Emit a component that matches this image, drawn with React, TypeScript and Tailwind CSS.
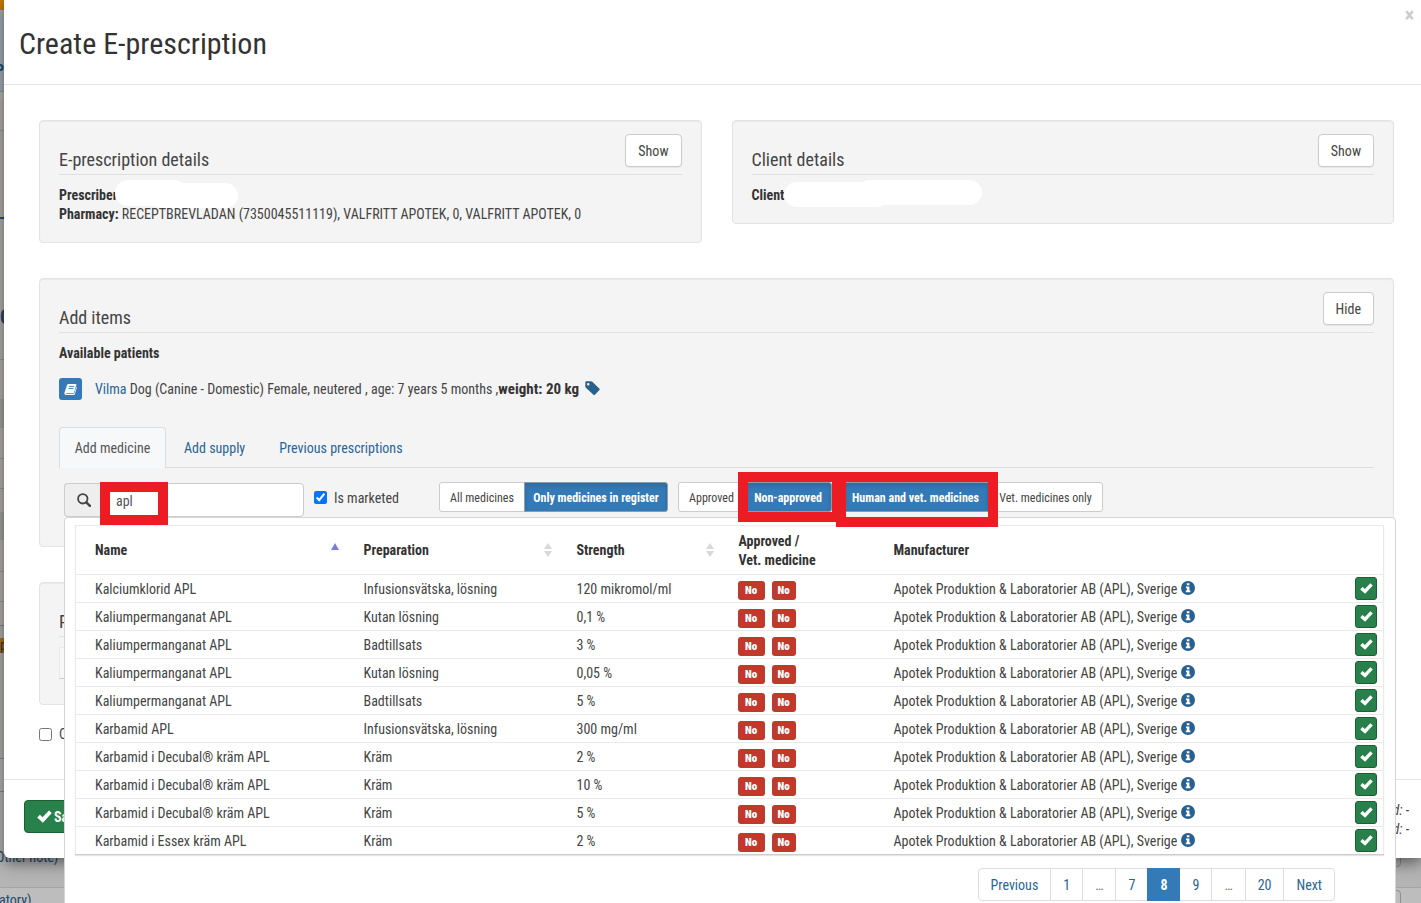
import React from 'react';
import clsx from 'clsx';

interface Medicine {
  id: number;
  name: string;
  preparation: string;
  strength: string;
}

const medicines: Medicine[] = [
  { id: 1, name: 'Kalciumklorid APL', preparation: 'Infusionsvätska, lösning', strength: '120 mikromol/ml' },
  { id: 2, name: 'Kaliumpermanganat APL', preparation: 'Kutan lösning', strength: '0,1 %' },
  { id: 3, name: 'Kaliumpermanganat APL', preparation: 'Badtillsats', strength: '3 %' },
  { id: 4, name: 'Kaliumpermanganat APL', preparation: 'Kutan lösning', strength: '0,05 %' },
  { id: 5, name: 'Kaliumpermanganat APL', preparation: 'Badtillsats', strength: '5 %' },
  { id: 6, name: 'Karbamid APL', preparation: 'Infusionsvätska, lösning', strength: '300 mg/ml' },
  { id: 7, name: 'Karbamid i Decubal® kräm APL', preparation: 'Kräm', strength: '2 %' },
  { id: 8, name: 'Karbamid i Decubal® kräm APL', preparation: 'Kräm', strength: '10 %' },
  { id: 9, name: 'Karbamid i Decubal® kräm APL', preparation: 'Kräm', strength: '5 %' },
  { id: 10, name: 'Karbamid i Essex kräm APL', preparation: 'Kräm', strength: '2 %' },
];

const pages = ['Previous', '1', '…', '7', '8', '9', '…', '20', 'Next'];

const CheckIcon = ({ className }: { className?: string }) => (
  <svg viewBox="0 0 14 12" className={className} fill="currentColor" aria-hidden="true">
    <path d="M0.2 7 2.7 4.400 5.200 6.600 11.200 0.300 13.800 2.700 5.500 11.800Z" />
  </svg>
);

const SearchIcon = () => (
  <svg viewBox="0 0 14 14" className="h-[14px] w-[14px]" fill="none" stroke="currentColor" aria-hidden="true">
    <circle cx="5.8" cy="5.8" r="4.7" strokeWidth="1.8" />
    <path d="m9.3 9.3 3.6 3.6" strokeWidth="2.4" strokeLinecap="round" />
  </svg>
);

const BookIcon = () => (
  <svg viewBox="0 0 14 14" className="h-[13px] w-[13px]" aria-hidden="true">
    <path
      d="M5 1h7.5c.7 0 1 .5.8 1.1l-2.5 8c-.2.5-.6.8-1.1.8H2.6c-.5 0-.6.7 0 .7h7.6c.5 0 .9-.3 1-.8L13.4 4c.4.3.5.7.4 1.1l-2.2 7c-.2.6-.7.9-1.3.9H2.2C.8 13 .1 11.800.5 10.600L3.200 2.300C3.500 1.500 4.100 1 5 1Z"
      fill="#fff"
    />
    <path d="M5.500 3.700h5.400M4.900 5.900h5.300" stroke="#337ab7" strokeWidth="1" />
  </svg>
);

const TagIcon = () => (
  <svg viewBox="0 0 14 14" className="mb-[2px] h-[15px] w-[15px]" fill="#286090" aria-hidden="true">
    <path
      fillRule="evenodd"
      d="M.3 1.100C.3.600.6.300 1.100.300h4.600c.4 0 .8.200 1.100.500l6.700 6.400c.4.400.4.900 0 1.300L9.200 12.900c-.4.400-.9.400-1.300 0L.8 6.200C.5 5.900.3 5.500.3 5.100ZM3 1.800a1.200 1.200 0 1 0 0 2.400 1.200 1.200 0 0 0 0-2.400Z"
    />
  </svg>
);

const InfoIcon = () => (
  <svg viewBox="0 0 14 14" className="inline-block h-[14px] w-[14px] align-[-1px]" aria-hidden="true">
    <circle cx="7" cy="7" r="7" fill="#286090" />
    <path d="M5.800 2.300h2.600v2H5.800ZM5 5.500h3.400v4h1v1.800H4.800V9.500h1.100V7.300H5Z" fill="#fff" />
  </svg>
);

const SortIcon = ({ sorted }: { sorted?: boolean }) =>
  sorted ? (
    <svg viewBox="0 0 10 14" className="h-[14px] w-[10px]" fill="#7b7fdc" aria-hidden="true">
      <path d="M5 0 9 7H1Z" />
    </svg>
  ) : (
    <svg viewBox="0 0 10 14" className="h-[14px] w-[10px]" fill="#d9d9d9" aria-hidden="true">
      <path d="M5 0 9 6H1ZM5 14 1 8h8Z" />
    </svg>
  );

const Panel = ({ title, action, children }: { title: string; action?: string; children: React.ReactNode }) => (
  <section className="rounded border border-[#e3e3e3] bg-[#f4f4f4] px-[19px] pt-3 pb-[18px] shadow-[inset_0_1px_1px_rgba(0,0,0,0.05)]">
    <div className="flex h-[42px] items-start justify-between border-b border-[#e0e0e0]">
      <h2 className="mt-[17px] text-[18px] leading-5">{title}</h2>
      {action && (
        <button
          type="button"
          className="mt-px h-[33px] rounded border border-[#ccc] bg-white px-3 text-[14px] shadow-[0_1px_1px_rgba(0,0,0,0.06)]"
        >
          {action}
        </button>
      )}
    </div>
    {children}
  </section>
);

interface ToggleProps {
  label: string;
  active?: boolean;
  className?: string;
}

const Toggle = ({ label, active, className }: ToggleProps) => (
  <button
    type="button"
    aria-pressed={!!active}
    className={clsx(
      'h-[30px] border pt-px text-center text-[12px] whitespace-nowrap',
      active
        ? 'border-[#8f9ba6] bg-[#337ab7] font-bold text-white shadow-[inset_0_3px_5px_rgba(0,0,0,0.125)]'
        : 'border-[#ccc] bg-white',
      className,
    )}
  >
    {label}
  </button>
);

// What is left visible of the journal page behind the dialog
const Backdrop = () => (
  <div className="absolute inset-0 flex flex-col bg-[#b4b4b4] text-[14px] text-[#1f4a70]" aria-hidden="true">
    <div className="h-[10px] bg-[#c47a00]" />
    <div className="flex h-[82px] items-end border-b border-[#8f979d] bg-[#a3aeb6] pb-[11px]">
      <span className="-ml-1 leading-5 font-bold">P</span>
    </div>
    <div className="h-2 bg-[#b9b9ae]" />
    <div className="h-[31px] border-b border-[#9a9a9a] bg-[#b4b1af]" />
    <div className="h-[88px] border-b-2 border-[#24527c] bg-[#b2b0ad]" />
    <div className="flex h-[141px] items-end border-b border-[#9a9a9a] bg-[#b2b2af] pb-8">
      <span className="text-[20px] leading-5 font-bold">C</span>
    </div>
    <div className="h-[39px] bg-[#b4b3b0]" />
    <div className="h-[29px] bg-[#a5a4a2]" />
    <div className="h-[31px] border-b border-[#9a9a9a] bg-[#b4b3b0]" />
    <div className="h-[30px] border-b border-[#9a9a9a] bg-[#b4b3b0]" />
    <div className="h-[23px] bg-[#b4b3b0]" />
    <div className="h-7 bg-[#a5a4a2]" />
    <div className="h-8 border-b border-[#9a9a9a] bg-[#b4b3b0]" />
    <div className="h-[30px] border-b border-[#9a9a9a] bg-[#b4b3b0]" />
    <div className="h-6 border-b border-[#888] bg-[#b4b3b0]" />
    <div className="flex h-[133px] items-start border-b border-[#888] bg-[#b1b2af] pt-3">
      <span className="w-1 bg-[#b07420] leading-[15px] text-[#333]">p</span>
    </div>
    <div className="h-[33px] border-b border-[#888]" />
    <div className="flex grow items-end justify-between border-b border-[#a5a5a5] pb-5">
      <span className="-ml-1 leading-5">Other note)</span>
      <span className="mr-5 h-5 w-3 rounded border border-[#8e8e8e]" />
    </div>
    <div className="flex h-[15px] items-start justify-between bg-[#bdbdbd] pt-[2px]">
      <span className="-ml-px leading-5">atory)</span>
      <span className="mr-5 h-5 w-3 rounded border border-[#8e8e8e]" />
    </div>
  </div>
);

const MedicineResults = () => (
  <div className="absolute top-full -right-[22px] left-0 z-10 h-[440px] rounded border border-[#d5d5d5] bg-white pt-[7px] pr-[11px] pl-[10px]">
    <table className="w-full table-fixed border border-[#eaeaea] border-b-[#ccc] text-left text-[14px] shadow-[0_1px_1px_rgba(0,0,0,0.1)]">
      <colgroup>
        <col className="w-[280px]" />
        <col className="w-[213px]" />
        <col className="w-[162px]" />
        <col className="w-[155px]" />
        <col />
        <col className="w-10" />
      </colgroup>
      <thead>
        <tr className="h-[49px] leading-[19px] text-[#333]">
          <th className="pr-4 pl-[19px]">
            <span className="flex items-center justify-between">
              Name <SortIcon sorted />
            </span>
          </th>
          <th className="pr-4 pl-2">
            <span className="flex items-center justify-between">
              Preparation <SortIcon />
            </span>
          </th>
          <th className="pr-4 pl-2">
            <span className="flex items-center justify-between">
              Strength <SortIcon />
            </span>
          </th>
          <th className="pt-px pl-2">
            Approved /<br />
            Vet. medicine
          </th>
          <th className="pl-2">Manufacturer</th>
          <th aria-label="Select" />
        </tr>
      </thead>
      <tbody>
        {medicines.map((m) => (
          <tr key={m.id} className="h-7 border-t border-[#eaeaea] leading-5 whitespace-nowrap">
            <td className="pl-[19px]">{m.name}</td>
            <td className="pl-2">{m.preparation}</td>
            <td className="pl-2">{m.strength}</td>
            <td className="pl-[7px]">
              <span className="flex gap-[7px] pt-[3px] text-[11px] leading-[19px] font-black text-white">
                <span className="w-[27px] rounded-[3px] bg-[#c0392b] text-center">No</span>
                <span className="w-6 rounded-[3px] bg-[#c0392b] text-center">No</span>
              </span>
            </td>
            <td className="pl-2">
              Apotek Produktion &amp; Laboratorier AB (APL), Sverige <InfoIcon />
            </td>
            <td className="pr-[6px]">
              <button
                type="button"
                aria-label={`Add ${m.name}`}
                className="ml-auto flex h-[23px] w-[22px] items-center justify-center rounded-[3px] border border-[#1c5f33] bg-[#28814a] text-white"
              >
                <CheckIcon className="h-[11px] w-[13px]" />
              </button>
            </td>
          </tr>
        ))}
      </tbody>
    </table>

    <nav className="mt-[13px] mr-[49px] flex justify-end" aria-label="Result pages">
      {pages.map((p, i) => (
        <a
          key={i}
          href="#"
          aria-current={p === '8' ? 'page' : undefined}
          className={clsx(
            '-ml-px flex h-[33px] items-center border px-3 text-[14px] first:rounded-l last:rounded-r',
            p === '8' && 'z-10 border-[#337ab7] bg-[#337ab7] font-bold text-white',
            p === '…' && 'border-[#ddd] text-[#777]',
            p !== '8' && p !== '…' && 'border-[#ddd] text-[#2a6496]',
          )}
        >
          {p}
        </a>
      ))}
    </nav>
  </div>
);

const MedicineSearch = () => (
  <div className="relative mt-[14px] ml-[5px] flex h-[35px] items-start">
    <label htmlFor="medicine-search" className="mt-px flex h-[34px] w-10 items-center justify-center rounded-l border border-r-0 border-[#ccc] bg-[#eee] pr-[2px]">
      <span className="sr-only">Search medicine</span>
      <SearchIcon />
    </label>
    <div className="relative mt-px w-[200px]">
      <input
        id="medicine-search"
        type="text"
        defaultValue="apl"
        className="h-[34px] w-full rounded-r border border-[#ccc] bg-white px-[11px] pt-[2px] text-[14px] text-[#555]"
      />
      <span className="absolute -top-px -left-1 z-20 h-[43px] w-[68px] border-10 border-[#ed1c24]" />
    </div>
    <label className="ml-[10px] flex h-8 items-center gap-[7px] whitespace-nowrap">
      <input type="checkbox" defaultChecked className="mb-[2px] h-[13px] w-[13px]" />
      Is marketed
    </label>

    <div className="ml-10 flex">
      <Toggle label="All medicines" className="w-[86px] rounded-l-[3px]" />
      <Toggle label="Only medicines in register" active className="-ml-px w-36 rounded-r-[3px]" />
    </div>
    <div className="ml-[10px] flex">
      <Toggle label="Approved" className="w-[67px] rounded-l-[3px]" />
      <div className="relative -ml-px">
        <Toggle label="Non-approved" active className="w-[88px] rounded-r-[3px]" />
        <span className="absolute -top-[10px] -left-[6px] z-20 h-[50px] w-[104px] border-10 border-[#ed1c24]" />
      </div>
    </div>
    <div className="ml-[10px] flex">
      <div className="relative">
        <Toggle label="Human and vet. medicines" active className="w-[147px] rounded-l-[3px]" />
        <span className="absolute -top-[10px] -left-[6px] z-20 h-[55px] w-[162px] border-10 border-[#ed1c24]" />
      </div>
      <Toggle label="Vet. medicines only" className="-ml-px w-[115px] rounded-r-[3px]" />
    </div>

    <MedicineResults />
  </div>
);

export default function App() {
  return (
    <div className="relative h-screen overflow-hidden font-['Roboto_Condensed','Liberation_Sans_Narrow','Roboto',sans-serif] text-[14px] leading-5 text-[#444]">
      <Backdrop />
      <div
        role="dialog"
        aria-labelledby="dialog-title"
        className="relative ml-1 rounded-bl-md bg-white shadow-[0_5px_15px_rgba(0,0,0,0.5)]"
      >
        <header className="relative flex h-[85px] items-center border-b border-[#e5e5e5] px-[15px] pt-[3px]">
          <h1 id="dialog-title" className="text-[30px] leading-9 text-[#333]">Create E-prescription</h1>
          <button type="button" aria-label="Close" className="absolute top-[5px] right-[7px] text-[20px] font-bold text-[#ccc]">
            ×
          </button>
        </header>

        <main className="flex flex-col gap-[35px] pt-[35px] pr-[27px] pl-[35px]">
          <div className="grid grid-cols-2 items-start gap-[30px]">
            <Panel title="E-prescription details" action="Show">
              <div className="relative mt-[11px] leading-[19px]">
                <p><b className="text-[#333]">Prescriber:</b></p>
                <p>
                  <b className="text-[#333]">Pharmacy:</b> RECEPTBREVLÅDAN (7350045511119), VALFRITT APOTEK, 0, VALFRITT APOTEK, 0
                </p>
                <span className="absolute -top-[6px] left-14 h-[26px] w-[72px] rounded-full bg-white" />
                <span className="absolute -top-[3px] left-[90px] h-[25px] w-[89px] rounded-full bg-white" />
              </div>
            </Panel>
            <Panel title="Client details" action="Show">
              <div className="relative mt-[11px] leading-[19px]">
                <p><b className="text-[#333]">Client:</b></p>
                <span className="absolute -top-1 left-8 h-[25px] w-[105px] rounded-full bg-white" />
                <span className="absolute -top-[6px] left-[105px] h-[25px] w-[125px] rounded-full bg-white" />
              </div>
            </Panel>
          </div>

          <Panel title="Add items" action="Hide">
            <p className="mt-[10px] font-bold text-[#333]">Available patients</p>
            <div className="mt-[15px] flex h-[22px] items-center">
              <button type="button" aria-label="Open journal" className="mr-[13px] flex h-[22px] w-[23px] items-center justify-center rounded-[3px] bg-[#337ab7]">
                <BookIcon />
              </button>
              <p className="mr-[6px]">
                <a href="#" className="text-[#2a6496]">Vilma</a> Dog (Canine - Domestic) Female, neutered , age: 7 years 5 months ,
                <b className="text-[15px] text-[#333]">weight: 20 kg</b>
              </p>
              <TagIcon />
            </div>

            <div className="mt-[27px] flex h-[41px] border-b border-[#ddd]">
              <a href="#" className="-mb-px flex w-[107px] items-center justify-center rounded-t border border-b-0 border-[#ddd] bg-[#f7f8fa] text-[#555]">
                Add medicine
              </a>
              <a href="#" className="ml-[2px] flex items-center px-4 pt-px text-[#2a6496]">Add supply</a>
              <a href="#" className="ml-[2px] flex items-center px-4 pt-px text-[#2a6496]">Previous prescriptions</a>
            </div>
            <MedicineSearch />
            <div className="h-[11px]" />
          </Panel>

          <Panel title="Prescription items">
            <div className="mt-[10px] h-8 border border-[#eaeaea] border-b-[#ccc] bg-[#f7f7f7]" />
            <div className="h-[7px]" />
          </Panel>
        </main>

        <label className="mt-[19px] ml-[35px] flex h-5 items-center gap-[7px]">
          <input type="checkbox" className="h-[13px] w-[13px]" />
          Create another prescription
        </label>

        <footer className="mt-[35px] flex h-[79px] items-start justify-between border-t border-[#e5e5e5] px-5 pt-5 pr-3">
          <button type="button" className="flex h-[33px] items-center gap-[2px] rounded border border-[#1c5f33] bg-[#28814a] px-3 font-bold text-white">
            <CheckIcon className="h-[13px] w-[15px]" />
            Save
          </button>
          <p className="pt-px text-right leading-[19px] italic">
            Created: -<br />
            Changed: -
          </p>
        </footer>
      </div>
    </div>
  );
}
